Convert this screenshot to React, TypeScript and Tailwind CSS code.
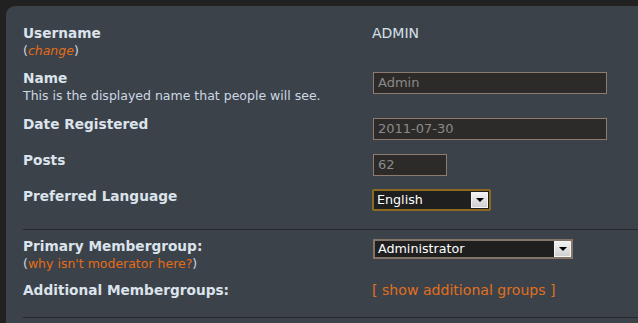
const font = "font-['DejaVu_Sans',Verdana,sans-serif]";

function Arrow() {
  return (
    <div className="flex h-[16px] w-[17px] items-center justify-center border border-[#f4f4f4] bg-gradient-to-b from-[#f2f2f2] to-[#d0d0d0]">
      <div className="h-0 w-0 border-x-[4px] border-t-[4px] border-x-transparent border-t-black" />
    </div>
  );
}

function TextBox({ value, width }: { value: string; width: string }) {
  return (
    <div className={`${width} mt-[2px] flex h-[22px] items-center border border-[#8c7b6e] bg-[#2d2b29] px-[4px] text-[13px] text-[#8a8a8a]`}>
      {value}
    </div>
  );
}

function Label({ children }: { children: React.ReactNode }) {
  return <div className="text-[13.7px] font-bold leading-[17px] text-[#dbe3ec]">{children}</div>;
}

function Sub({ children }: { children: React.ReactNode }) {
  return <div className="text-[12.5px] leading-[17px] text-[#ccd8e4]">{children}</div>;
}

export default function App() {
  return (
    <div className={`${font} h-[323px] w-[638px] overflow-hidden bg-[#212121] pl-[6px] pt-[6px]`}>
      <div className="h-full rounded-tl-[9px] bg-[#3c4249] pl-[17px] pt-[19px]">
        <div className="flex items-start">
          <div className="w-[349px]">
            <Label>Username</Label>
            <Sub>
              (<span className="italic text-[#e56c17]">change</span>)
            </Sub>
          </div>
          <div className="text-[14px] leading-[17px] text-[#d6e0ea]">ADMIN</div>
        </div>

        <div className="mt-[11px] flex items-start">
          <div className="w-[350px]">
            <Label>Name</Label>
            <Sub>This is the displayed name that people will see.</Sub>
          </div>
          <TextBox value="Admin" width="w-[234px]" />
        </div>

        <div className="mt-[12px] flex items-start">
          <div className="w-[350px]">
            <Label>Date Registered</Label>
          </div>
          <TextBox value="2011-07-30" width="w-[234px]" />
        </div>

        <div className="mt-[12px] flex items-start">
          <div className="w-[350px]">
            <Label>Posts</Label>
          </div>
          <TextBox value="62" width="w-[74px]" />
        </div>

        <div className="mt-[12px] flex items-start">
          <div className="w-[349px]">
            <Label>Preferred Language</Label>
          </div>
          <div className="mt-[1px] flex h-[22px] w-[119px] items-center justify-between rounded-[2px] border-2 border-[#8c6a22] bg-[#1f1f1f] pl-[3px] pr-[1px] text-[12.7px] text-white">
            <span>English</span>
            <Arrow />
          </div>
        </div>

        <div className="mt-[18px] h-px bg-[#25292d]" />

        <div className="mt-[8px] flex items-start">
          <div className="w-[350px]">
            <Label>Primary Membergroup:</Label>
            <Sub>
              (<span className="text-[#e56c17]">why isn't moderator here?</span>)
            </Sub>
          </div>
          <div className="mt-[1px] flex h-[20px] w-[200px] items-center justify-between border-2 border-[#857468] bg-[#1f1f1f] pl-[3px] text-[12.7px] text-white">
            <span>Administrator</span>
            <Arrow />
          </div>
        </div>

        <div className="mt-[10px] flex items-start">
          <div className="w-[349px]">
            <Label>Additional Membergroups:</Label>
          </div>
          <div className="text-[14.1px] leading-[17px] text-[#e06f1e]">[ show additional groups ]</div>
        </div>

        <div className="mt-[18px] h-px bg-[#25292d]" />
      </div>
    </div>
  );
}
